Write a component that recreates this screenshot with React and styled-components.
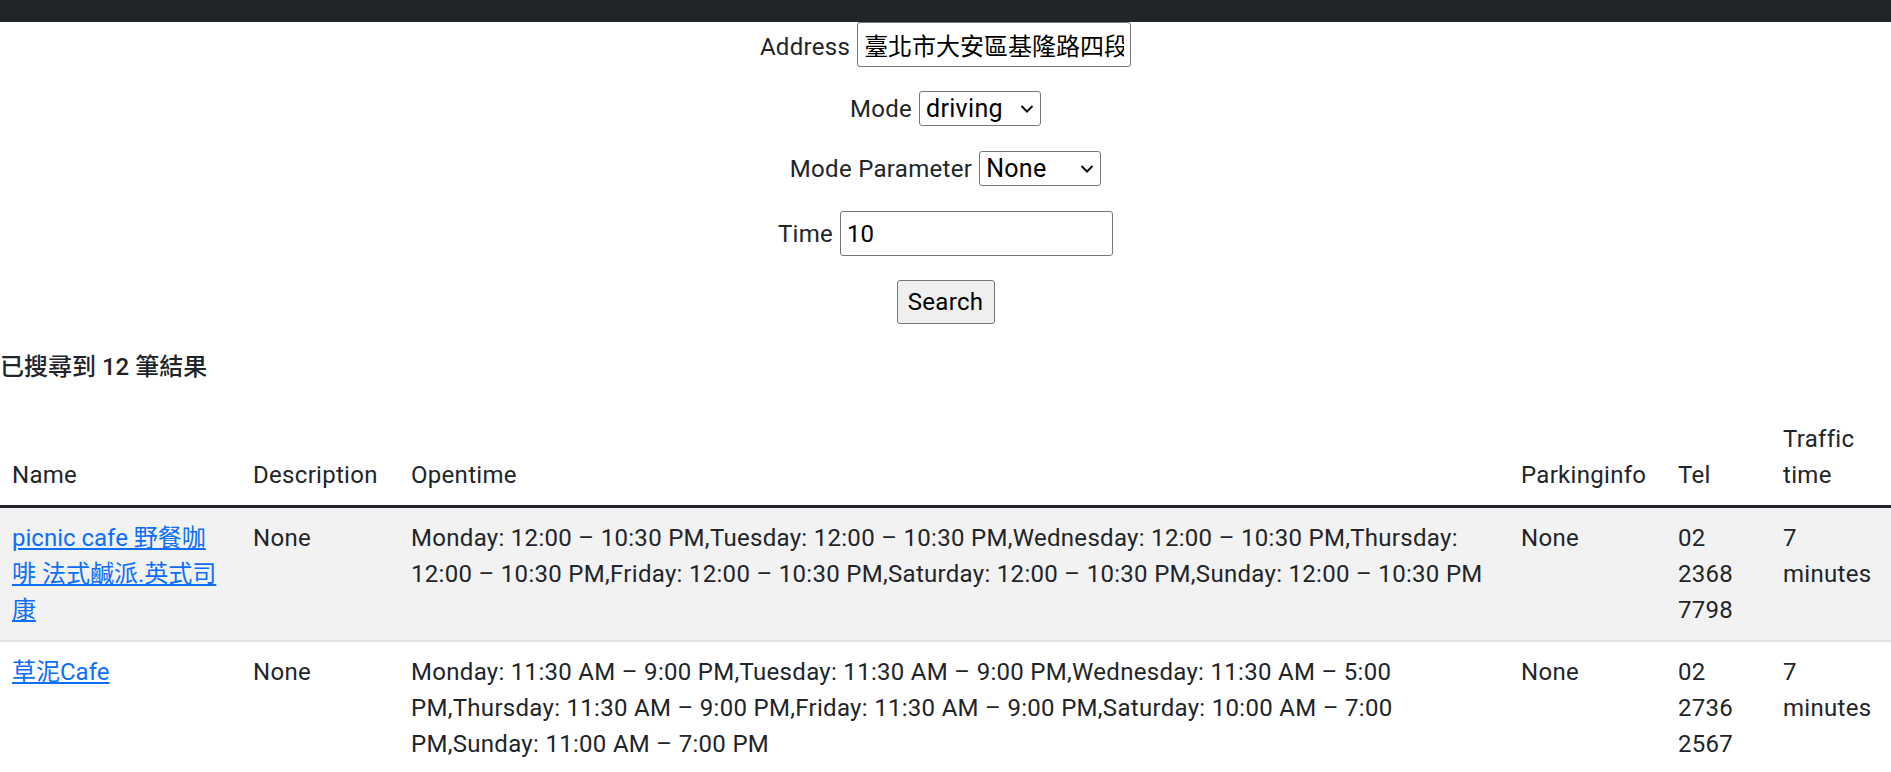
import React from "react"
import styled, { createGlobalStyle } from "styled-components"

const GlobalStyle = createGlobalStyle`
  body {
    margin: 0;
    font-family: Roboto, "Noto Sans CJK TC", sans-serif;
    font-size: 24px;
    line-height: 1.5;
    letter-spacing: 0.3px;
    color: #212529;
    background: #fff;
  }
`

const places = [
  {
    name: "picnic cafe 野餐咖啡 法式鹹派.英式司康",
    description: "None",
    opentime:
      "Monday: 12:00 – 10:30 PM,Tuesday: 12:00 – 10:30 PM,Wednesday: 12:00 – 10:30 PM,Thursday: 12:00 – 10:30 PM,Friday: 12:00 – 10:30 PM,Saturday: 12:00 – 10:30 PM,Sunday: 12:00 – 10:30 PM",
    parking: "None",
    tel: "02 2368 7798",
    traffic: "7 minutes",
  },
  {
    name: "草泥Cafe",
    description: "None",
    opentime:
      "Monday: 11:30 AM – 9:00 PM,Tuesday: 11:30 AM – 9:00 PM,Wednesday: 11:30 AM – 5:00 PM,Thursday: 11:30 AM – 9:00 PM,Friday: 11:30 AM – 9:00 PM,Saturday: 10:00 AM – 7:00 PM,Sunday: 11:00 AM – 7:00 PM",
    parking: "None",
    tel: "02 2736 2567",
    traffic: "7 minutes",
  },
]

const columns = [
  { label: "Name", width: 241 },
  { label: "Description", width: 158 },
  { label: "Opentime", width: 1110 },
  { label: "Parkinginfo", width: 157 },
  { label: "Tel", width: 105 },
  { label: "Traffic time", width: 120 },
]

function Chevron() {
  return (
    <svg width="14" height="9" viewBox="0 0 14 9">
      <polyline
        points="1.5,1.5 7,7 12.5,1.5"
        fill="none"
        stroke="#111"
        strokeWidth="2"
      />
    </svg>
  )
}

function Dropdown({ value, options }) {
  return (
    <SelectWrap>
      <Select defaultValue={value}>
        {options.map((o) => (
          <option key={o}>{o}</option>
        ))}
      </Select>
      <Arrow>
        <Chevron />
      </Arrow>
    </SelectWrap>
  )
}

export default function App() {
  return (
    <>
      <GlobalStyle />
      <Navbar />
      <main>
        <SearchForm onSubmit={(e) => e.preventDefault()}>
          <Field>
            <Label>Address</Label>
            <TextInput $width={274} defaultValue="臺北市大安區基隆路四段" />
          </Field>
          <Field>
            <Label>Mode</Label>
            <Dropdown value="driving" options={["driving", "walking", "bicycling", "transit"]} />
          </Field>
          <Field>
            <Label>Mode Parameter</Label>
            <Dropdown value="None" options={["None", "bus", "subway", "train"]} />
          </Field>
          <Field>
            <Label>Time</Label>
            <TextInput $width={273} defaultValue="10" />
          </Field>
          <Field>
            <Button type="submit">Search</Button>
          </Field>
        </SearchForm>

        <ResultCount>已搜尋到 12 筆結果</ResultCount>

        <Table>
          <colgroup>
            {columns.map((c) => (
              <Col key={c.label} $width={c.width} />
            ))}
          </colgroup>
          <thead>
            <tr>
              {columns.map((c) => (
                <Th key={c.label}>{c.label}</Th>
              ))}
            </tr>
          </thead>
          <tbody>
            {places.map((p, index) => (
              <Row key={p.name} $striped={index % 2 === 0}>
                <Td>
                  <NameLink href="#">{p.name}</NameLink>
                </Td>
                <Td>{p.description}</Td>
                <Td>{p.opentime}</Td>
                <Td>{p.parking}</Td>
                <Td>{p.tel}</Td>
                <Td>{p.traffic}</Td>
              </Row>
            ))}
          </tbody>
        </Table>
      </main>
    </>
  )
}

const Navbar = styled.nav`
  height: 22px;
  background: #212529;
`

const SearchForm = styled.form`
  display: flex;
  flex-direction: column;
  align-items: center;
`

const Field = styled.div`
  display: flex;
  align-items: baseline;
  justify-content: center;
  gap: 7px;
  margin-bottom: 24px;
`

const Label = styled.label`
  font-size: 24px;
`

const TextInput = styled.input`
  box-sizing: border-box;
  width: ${(p) => p.$width}px;
  height: 45px;
  padding: 0 6px;
  border: 1px solid #767676;
  border-radius: 3px;
  font-family: Roboto, "Noto Sans CJK TC", sans-serif;
  font-size: 24px;
  letter-spacing: 0;
  color: #000;
  background: #fff;
`

const SelectWrap = styled.span`
  position: relative;
  display: inline-flex;
`

const Select = styled.select`
  box-sizing: border-box;
  appearance: none;
  width: 122px;
  height: 35px;
  padding: 0 26px 0 6px;
  border: 1px solid #767676;
  border-radius: 3px;
  font-family: Roboto, "Noto Sans CJK TC", sans-serif;
  font-size: 25px;
  line-height: 33px;
  letter-spacing: 0.3px;
  color: #000;
  background: #fff;
`

const Arrow = styled.span`
  position: absolute;
  right: 7px;
  top: 50%;
  transform: translateY(-50%);
  display: flex;
  pointer-events: none;
`

const Button = styled.button`
  box-sizing: border-box;
  width: 98px;
  height: 44px;
  padding: 0 9px;
  border: 1px solid #767676;
  border-radius: 3px;
  background: #efefef;
  font-family: Roboto, "Noto Sans CJK TC", sans-serif;
  font-size: 24px;
  letter-spacing: 0.3px;
  color: #000;
`

const ResultCount = styled.h6`
  margin: 5px 0 27px;
  font-size: 24px;
  font-weight: 500;
  line-height: 1.2;
  letter-spacing: 0;
`

const Table = styled.table`
  width: 100%;
  table-layout: fixed;
  border-collapse: collapse;
`

const Col = styled.col`
  width: ${(p) => p.$width}px;
`

const Th = styled.th`
  padding: 12px;
  text-align: left;
  font-weight: 400;
  vertical-align: bottom;
  border-bottom: 3px solid #212529;
`

const Row = styled.tr`
  background: ${(p) => (p.$striped ? "#f2f2f2" : "#fff")};
`

const Td = styled.td`
  padding: 12px;
  vertical-align: top;
  border-bottom: 2px solid #dee2e6;
`

const NameLink = styled.a`
  color: #0d6efd;
  text-decoration: underline;
  letter-spacing: 0;
`
